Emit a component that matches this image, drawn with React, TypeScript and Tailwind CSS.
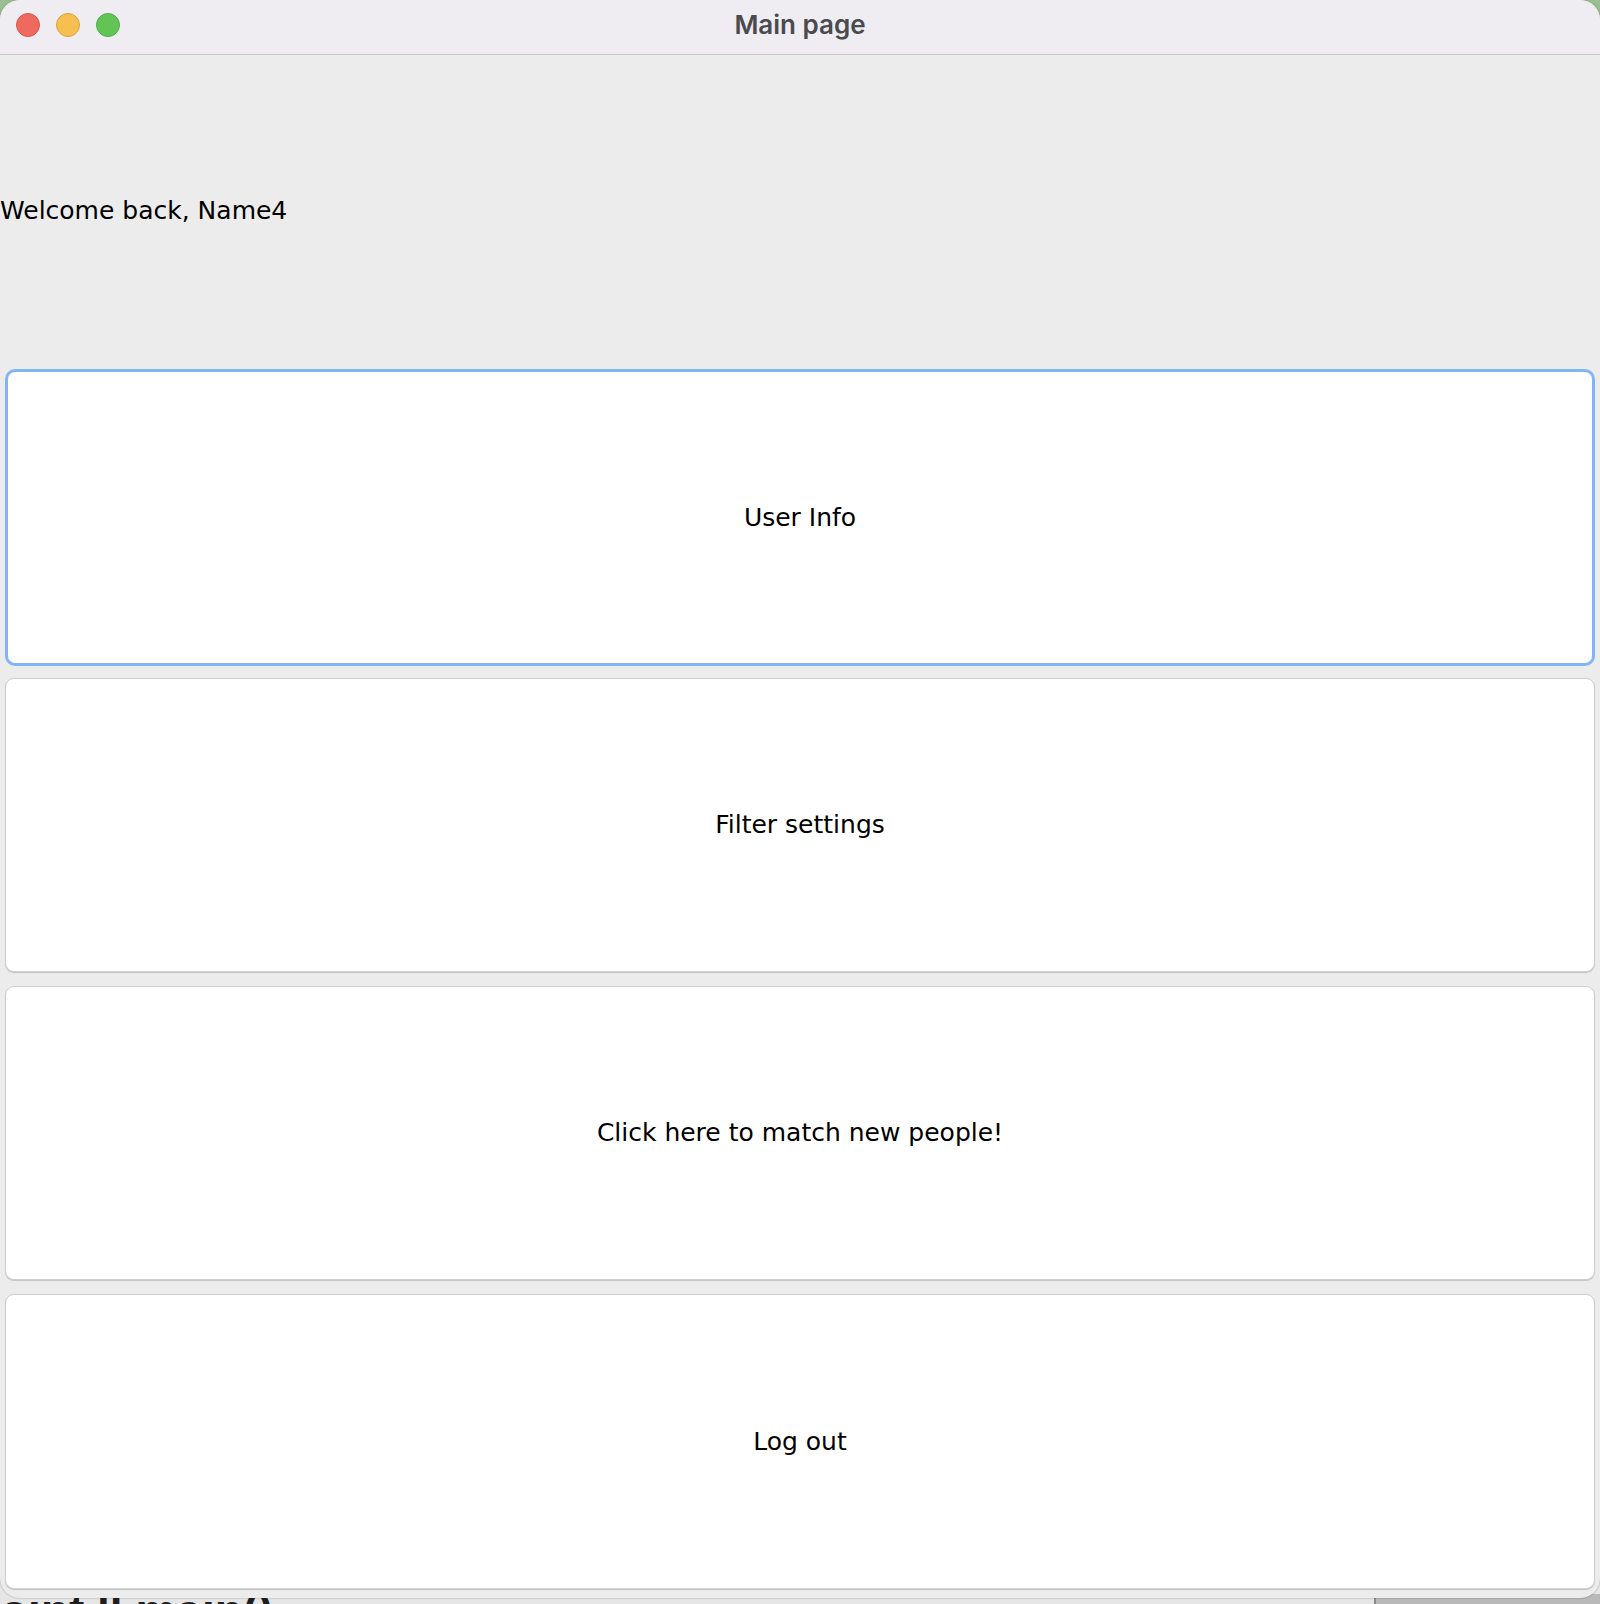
import React from "react";

const buttons = ["User Info", "Filter settings", "Click here to match new people!", "Log out"];

function TrafficLights() {
  return (
    <div className="absolute left-[16px] top-[13px] flex gap-[16px]">
      <span className="h-[24px] w-[24px] rounded-full border border-[#d9564e] bg-[#ee6a5f]" />
      <span className="h-[24px] w-[24px] rounded-full border border-[#d8a23f] bg-[#f5c04f]" />
      <span className="h-[24px] w-[24px] rounded-full border border-[#4fae45] bg-[#61c454]" />
    </div>
  );
}

export default function App() {
  return (
    <div className="relative h-[1604px] w-[1600px] overflow-hidden bg-[#9bbf92]">
      {/* whatever sits behind the window */}
      <div className="absolute bottom-0 left-0 right-0 flex h-[40px] items-end bg-[#e6e6e6]">
        <div
          className="-mb-[30px] whitespace-nowrap text-[46px] font-bold leading-none text-[#1e1e1e]"
          style={{ fontFamily: '"Liberation Sans", Arial, sans-serif' }}
        >
          oint ll main()
        </div>
        <div className="absolute bottom-0 right-0 h-[10px] w-[226px] border-l-2 border-[#8a8a8a] bg-[#b9b9b9]" />
      </div>

      <div
        className="relative flex h-[1598px] flex-col overflow-hidden rounded-[20px] bg-[#ececec] shadow-[0_0_2px_rgba(0,0,0,0.35)]"
        style={{ fontFamily: '"DejaVu Sans", "Open Sans", sans-serif' }}
      >
        <div className="relative flex h-[55px] shrink-0 items-center justify-center border-b border-[#c9c9c9] bg-[#efedf2] pb-[5px]">
          <TrafficLights />
          <span
            className="text-[26px] font-semibold text-[#4b4a4f]"
            style={{ fontFamily: 'Inter, Roboto, sans-serif' }}
          >
            Main page
          </span>
        </div>

        <div className="grid h-[1540px] shrink-0 grid-rows-5">
          <div className="flex items-center pt-[4px] text-[25px] text-black">Welcome back, Name4</div>
          {buttons.map((label, i) => (
            <div key={label} className={i === 3 ? "flex px-[5px] pb-[6px] pt-[7px]" : i === 0 ? "flex px-[5px] pb-[5px] pt-[6px]" : "flex px-[5px] py-[7px]"}>
              <button
                className={
                  i === 0
                    ? "flex flex-1 items-center justify-center rounded-[10px] border-[3px] border-[#80b6f6] bg-white text-[25px] text-black"
                    : "flex flex-1 items-center justify-center rounded-[9px] border border-[#d0d0d0] bg-white text-[25px] text-black shadow-[0_1px_1px_rgba(0,0,0,0.18)]"
                }
              >
                {label}
              </button>
            </div>
          ))}
        </div>
      </div>
    </div>
  );
}
